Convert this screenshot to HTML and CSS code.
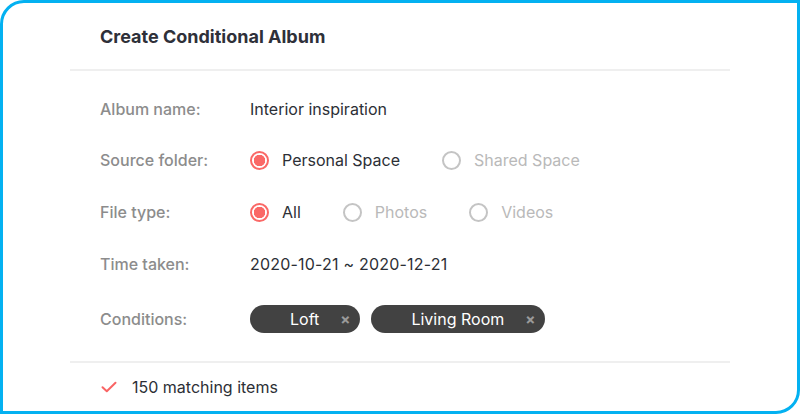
FILE: index.html
```html
<!DOCTYPE html>
<html>
<head>
<meta charset="utf-8">
<link rel="stylesheet" href="styles.css">
</head>
<body>
<div class="frame">
  <div class="head"><h1 class="title">Create Conditional Album</h1></div>
  <div class="rows">
    <div class="row row-first">
      <div class="label">Album name:</div>
      <div class="value">Interior inspiration</div>
    </div>
    <div class="row">
      <div class="label">Source folder:</div>
      <div class="value options">
        <span class="opt on"><span class="radio"></span>Personal Space</span>
        <span class="opt"><span class="radio"></span>Shared Space</span>
      </div>
    </div>
    <div class="row">
      <div class="label">File type:</div>
      <div class="value options">
        <span class="opt on"><span class="radio"></span>All</span>
        <span class="opt"><span class="radio"></span>Photos</span>
        <span class="opt"><span class="radio"></span>Videos</span>
      </div>
    </div>
    <div class="row">
      <div class="label">Time taken:</div>
      <div class="value date">2020-10-21 ~ 2020-12-21</div>
    </div>
    <div class="row row-chips">
      <div class="label">Conditions:</div>
      <div class="value chips">
        <span class="chip"><span class="chip-text">Loft</span><span class="chip-x">×</span></span>
        <span class="chip"><span class="chip-text">Living Room</span><span class="chip-x">×</span></span>
      </div>
    </div>
  </div>
  <div class="foot">
    <svg class="check" width="16" height="12" viewBox="0 0 16 12"><path d="M1.5 6.2 L5.8 10.2 L14.5 1.8" fill="none" stroke="#f96464" stroke-width="2" stroke-linecap="round" stroke-linejoin="round"/></svg>
    <span class="foot-text">150 matching items</span>
  </div>
</div>
</body>
</html>
```
FILE: styles.css
```css
* { box-sizing: border-box; }
html, body { margin: 0; padding: 0; background: #fff; }
body {
  font-family: Inter, "Noto Sans", sans-serif;
  color: #2c2f36;
}
.frame {
  width: 800px;
  height: 414px;
  border: 3px solid #03b1f1;
  border-radius: 24px 0 24px 0;
  padding: 0 67px;
  overflow: hidden;
}
.head {
  height: 68px;
  border-bottom: 2px solid #efefef;
  display: flex;
  align-items: center;
  padding-left: 30px;
}
.title {
  margin: 0;
  font-size: 18px;
  font-weight: 700;
  color: #2e3039;
}
.rows {
  padding-top: 12px;
  padding-bottom: 13px;
  border-bottom: 2px solid #efefef;
}
.row {
  height: 52px;
  display: flex;
  align-items: center;
  padding-left: 30px;
  font-size: 16px;
}
.row-first { height: 51px; }
.row-chips { height: 58px; }
.label {
  width: 150px;
  color: #8c8c8c;
  font-weight: 500;
}
.value { color: #2c2f36; }
.date { letter-spacing: 0.2px; }
.options { display: flex; align-items: center; gap: 42px; }
.opt { display: flex; align-items: center; gap: 13px; color: #b9b9b9; }
.opt.on { color: #2c2f36; }
.radio {
  width: 19px;
  height: 19px;
  border-radius: 50%;
  border: 2px solid #c4c4c4;
  display: inline-block;
}
.opt.on .radio {
  border-color: #fa6866;
  background: radial-gradient(circle, #fa6866 0 5.5px, #fff 6px);
}
.chips { display: flex; gap: 11px; }
.chip {
  display: flex;
  align-items: center;
  height: 28px;
  border-radius: 14px;
  background: #424242;
  padding: 0 10px 0 40px;
  color: #fff;
}
.chip-text { margin-right: 21px; }
.chip-x { color: #9a9a9a; font-size: 15px; font-weight: 700; }
.foot {
  height: 48px;
  display: flex;
  align-items: center;
  padding-left: 31px;
  gap: 15px;
  font-size: 16px;
}
.check { display: block; }
.foot-text { color: #2c2f36; }
```
